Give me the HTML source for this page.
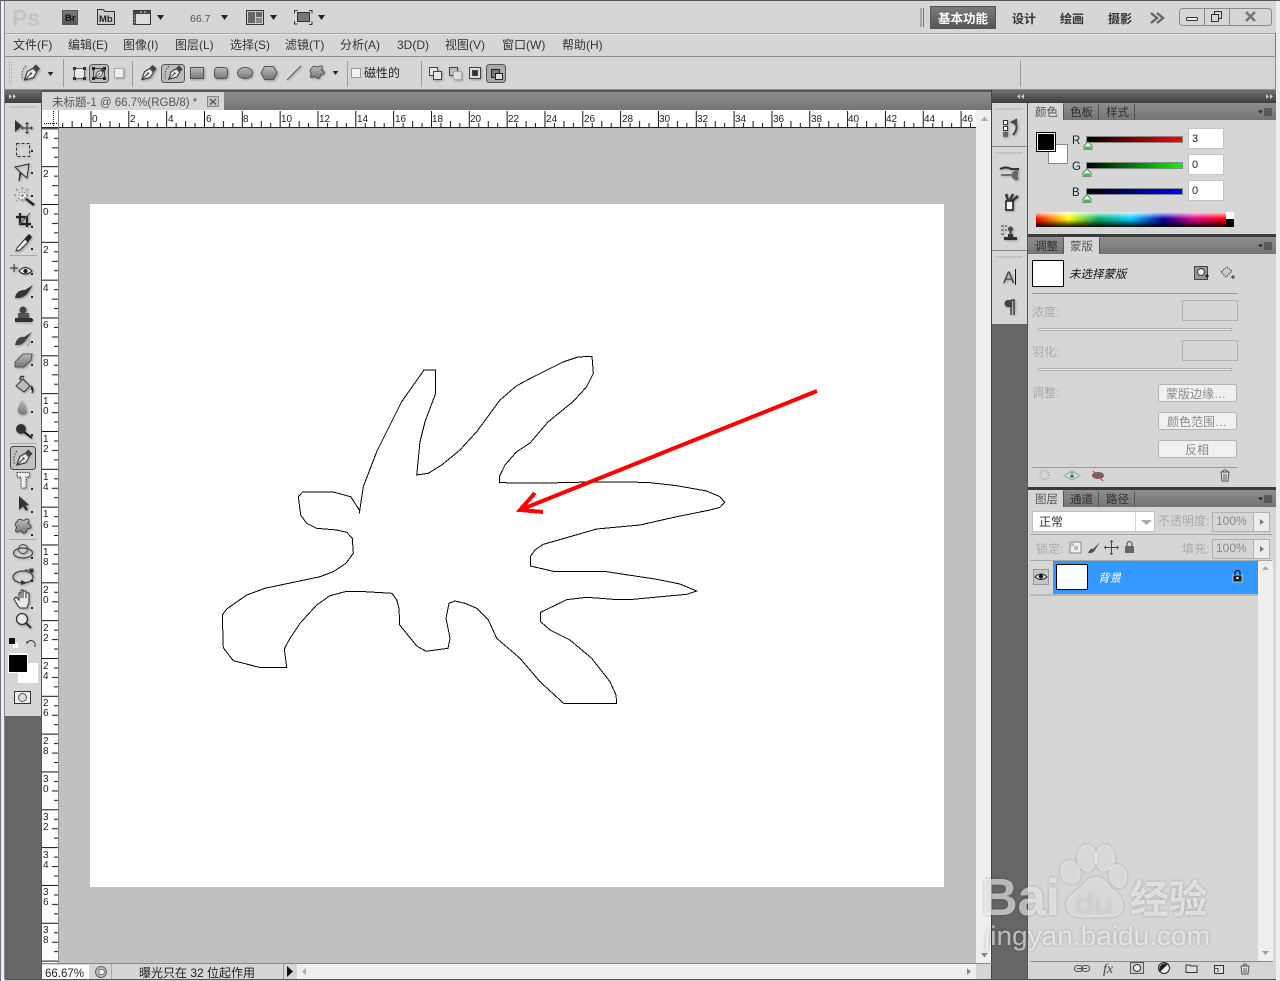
<!DOCTYPE html>
<html><head><meta charset="utf-8"><title>Photoshop</title>
<style>
html,body{margin:0;padding:0;background:#d6d6d6;width:1280px;height:981px;overflow:hidden}
svg{display:block}
text{font-family:"Liberation Sans","Noto Sans CJK SC",sans-serif;font-size:12px;fill:#2a2a2a}
.m{font-size:12px;fill:#333}
.r{font-size:10px;fill:#1a1a2a}
.tab{font-size:11.5px;fill:#2e2e2e}
.act{font-size:11.5px;fill:#555}
.dis{font-size:12px;fill:#a9a9a9;stroke:none}
.btn{font-size:12px;fill:#8a8a8a}
.pct{font-size:12px;fill:#888}
.sd{filter:drop-shadow(1px 1px 1px rgba(0,0,0,.28))}
</style></head><body>
<svg xmlns="http://www.w3.org/2000/svg" width="1280" height="981" viewBox="0 0 1280 981">
<defs>
<linearGradient id="hd" x1="0" y1="0" x2="0" y2="1"><stop offset="0" stop-color="#707070"/><stop offset="1" stop-color="#3c3c3c"/></linearGradient>
<linearGradient id="tb" x1="0" y1="0" x2="0" y2="1"><stop offset="0" stop-color="#8e8e8e"/><stop offset="1" stop-color="#747474"/></linearGradient>
<linearGradient id="sh" x1="0" y1="0" x2="0" y2="1"><stop offset="0" stop-color="#bbb"/><stop offset="1" stop-color="#777"/></linearGradient>
<linearGradient id="wk" x1="0" y1="0" x2="0" y2="1"><stop offset="0" stop-color="#7c7c7c"/><stop offset="1" stop-color="#555"/></linearGradient>
<linearGradient id="gr" x1="0" x2="1"><stop offset="0" stop-color="#000"/><stop offset="1" stop-color="#f00"/></linearGradient>
<linearGradient id="gg" x1="0" x2="1"><stop offset="0" stop-color="#000"/><stop offset="1" stop-color="#0f0"/></linearGradient>
<linearGradient id="gb" x1="0" x2="1"><stop offset="0" stop-color="#000"/><stop offset="1" stop-color="#00f"/></linearGradient>
<linearGradient id="spec" x1="0" x2="1">
<stop offset="0" stop-color="#f00"/><stop offset=".17" stop-color="#ff0"/><stop offset=".33" stop-color="#0a6"/><stop offset=".5" stop-color="#0cf"/><stop offset=".67" stop-color="#00a"/><stop offset=".83" stop-color="#d08"/><stop offset="1" stop-color="#f00"/></linearGradient>
<linearGradient id="specv" x1="0" y1="0" x2="0" y2="1"><stop offset="0" stop-color="#fff" stop-opacity=".85"/><stop offset=".45" stop-color="#fff" stop-opacity="0"/><stop offset=".5" stop-color="#000" stop-opacity="0"/><stop offset="1" stop-color="#000" stop-opacity=".95"/></linearGradient>
<pattern id="rt" x="90.5" y="111" width="37.83" height="16" patternUnits="userSpaceOnUse">
<rect x="0" y="0" width="1" height="16" fill="#111"/><rect x="9.5" y="12" width="1" height="4" fill="#111"/><rect x="19" y="10" width="1" height="6" fill="#111"/><rect x="28.4" y="12" width="1" height="4" fill="#111"/></pattern>
<pattern id="rl" x="42" y="204" width="16" height="37.83" patternUnits="userSpaceOnUse">
<rect x="0" y="0" width="16" height="1" fill="#111"/><rect x="12" y="9.5" width="4" height="1" fill="#111"/><rect x="10" y="19" width="6" height="1" fill="#111"/><rect x="12" y="28.4" width="4" height="1" fill="#111"/></pattern>
<symbol id="nib" viewBox="0 0 20 20"><path d="M2 18L5 9L11 5.5L15 9.5L11.5 15.5Z" fill="#e4e4e4" stroke="#3a3a3a" stroke-width="1.2"/><path d="M2.5 17.5L8.5 11.5" stroke="#3a3a3a" fill="none"/><circle cx="9" cy="11" r="1.1" fill="#3a3a3a"/><path d="M11 4.5L14 1.5L18.5 6L15.5 9Z" fill="#444"/></symbol>
<symbol id="star" viewBox="0 0 20 20"><path d="M5 3C8 1 9 5 12 3C15 1 18 3 15 7C19 8 20 12 16 12C13 12 15 17 11 17C8 17 9 13 6 15C3 17 1 15 3 12C4 10 1 9 2 7C3 5 4 5 5 3Z" fill="url(#sh)" stroke="#444"/></symbol>
<symbol id="menuic" viewBox="0 0 14 8"><path d="M0 2.5H5L2.5 5.5Z" fill="#222"/><path d="M6 1H14M6 3H14M6 5H14M6 7H14" stroke="#333"/></symbol>
<symbol id="tri" viewBox="0 0 7 5"><path d="M0 0H7L3.5 5Z" fill="#222"/></symbol>
<symbol id="sl" viewBox="0 0 10 9"><path d="M5 .8L9 5V8.3H1V5Z" fill="#fff" stroke="#3a8a4a"/><rect x="2" y="5.5" width="6" height="2.3" fill="#39b54a"/></symbol>
<symbol id="grip" viewBox="0 0 28 2"><path d="M0 1H28" stroke="#999" stroke-width="1.4" stroke-dasharray="1 1"/></symbol>
</defs>

<!-- window chrome -->
<rect width="1280" height="981" fill="#d6d6d6"/>
<rect width="1280" height="1" fill="#5a5560"/>
<rect x="0" y="0" width="1" height="981" fill="#6a7080"/>
<rect x="1" y="1" width="3" height="980" fill="#eceef0"/>
<rect x="1276" y="1" width="4" height="980" fill="#eceef0"/>
<rect x="4" y="1" width="1" height="978" fill="#888"/>
<rect x="1275" y="33" width="1" height="946" fill="#777"/>
<rect x="5" y="33" width="1270" height="1" fill="#a6a6a6"/>
<rect x="5" y="34" width="1270" height="1" fill="#e6e6e6"/>

<!-- app bar -->
<text x="12" y="26" style="font-size:23px;font-weight:bold;fill:#c4c4c4">Ps</text>
<rect x="62.500" y="10.500" width="15" height="14" fill="url(#wk)" stroke="#555"/><text x="65" y="21" style="font-size:9.5px;font-weight:bold;fill:#111">Br</text>
<path d="M97.5 13.5V9.5H103L105 11.5H114.5V24.5H97.5Z" fill="#ccc" stroke="#333"/><text x="99" y="22" style="font-size:9.5px;font-weight:bold;fill:#222">Mb</text>
<rect x="133.5" y="10.5" width="17" height="14" fill="#ddd" stroke="#333"/><path d="M133 11h18v3h-18zM133 11h3v14h-3z" fill="#444"/><path d="M134 16h1.3M134 19h1.3M134 22h1.3" stroke="#ddd"/><path d="M140 12h2M144 12h2" stroke="#ddd"/>
<use href="#tri" x="157" y="15" width="7" height="5"/>
<text x="190" y="22" style="font-size:10.5px;fill:#555">66.7</text>
<use href="#tri" x="221" y="15" width="7" height="5"/>
<rect x="246.5" y="10.5" width="17" height="14" fill="#ccc" stroke="#333"/><rect x="248" y="12" width="7" height="11" fill="#666"/><rect x="256" y="12" width="6" height="5" fill="#666"/><rect x="256" y="18" width="6" height="5" fill="#888"/>
<use href="#tri" x="270" y="15" width="7" height="5"/>
<path d="M294.5 13.5v-3h3M309 10.500h3v3M294.500 21v3h3M309 24.500h3v-3" stroke="#333" fill="none"/><rect x="297.500" y="12.500" width="12" height="9" fill="#777" stroke="#333"/>
<use href="#tri" x="318" y="15" width="7" height="5"/>
<path d="M921 8V27M923.500 8V27" stroke="#777"/>
<rect x="930.500" y="6.500" width="65" height="22" fill="url(#wk)" stroke="#555"/>
<text x="938" y="23" style="font-size:12.500px;font-weight:bold;fill:#fff">基本功能</text>
<text x="1012" y="23" style="font-size:12px;font-weight:bold;fill:#333">设计</text>
<text x="1060" y="23" style="font-size:12px;font-weight:bold;fill:#333">绘画</text>
<text x="1108" y="23" style="font-size:12px;font-weight:bold;fill:#333">摄影</text>
<path d="M1151 13L1157 18L1151 23M1157 13L1163 18L1157 23" stroke="#666" stroke-width="2.400" fill="none"/>
<rect x="1179.500" y="8.500" width="92" height="17" rx="3" fill="#d6d6d6" stroke="#8a8a8a"/>
<path d="M1204.500 8.500V25.500M1229.500 8.500V25.500" stroke="#8a8a8a"/>
<rect x="1186.500" y="17.500" width="11" height="3" rx="1" fill="#eee" stroke="#333"/>
<rect x="1211.500" y="14.500" width="7" height="7" fill="#d6d6d6" stroke="#333"/><path d="M1214.500 14.500v-3h7v7h-3" fill="none" stroke="#333"/>
<path d="M1246 12L1255 21M1255 12L1246 21" stroke="#777" stroke-width="2.600"/>

<!-- menu -->
<g class="menu">
<text class="m" x="13" y="49">文件(F)</text>
<text class="m" x="68" y="49">编辑(E)</text>
<text class="m" x="123" y="49">图像(I)</text>
<text class="m" x="175" y="49">图层(L)</text>
<text class="m" x="230" y="49">选择(S)</text>
<text class="m" x="285" y="49">滤镜(T)</text>
<text class="m" x="340" y="49">分析(A)</text>
<text class="m" x="397" y="49">3D(D)</text>
<text class="m" x="445" y="49">视图(V)</text>
<text class="m" x="502" y="49">窗口(W)</text>
<text class="m" x="562" y="49">帮助(H)</text>
</g>

<!-- options bar -->
<rect x="4.500" y="56.500" width="1271" height="33" fill="#d6d6d6" stroke="#8c8c8c"/>
<path d="M9.500 62V85M11.500 62V85" stroke="#aaa" stroke-dasharray="1 1"/>
<path d="M63.500 59V87M132.500 61V87M347.500 61V87M421.500 61V87M1020.500 60V87" stroke="#9c9c9c"/>
<g class="sd">
<use href="#nib" x="22" y="63" width="20" height="19"/><path d="M26 66Q20 72 23 80" stroke="#444" stroke-dasharray="1.500 1.500" fill="none"/>
<rect x="74.500" y="68.500" width="10" height="10" fill="#e8e8e8" stroke="#666"/><path d="M73 67h3v3h-3zM83 67h3v3h-3zM73 77h3v3h-3zM83 77h3v3h-3z" fill="#333"/>
<rect x="114.500" y="68.500" width="9" height="9" fill="#eee" stroke="#aaa"/>
<use href="#nib" x="140" y="63" width="18" height="19"/>
<rect x="190.500" y="67.500" width="13" height="11" fill="url(#sh)" stroke="#555"/>
<rect x="214.500" y="67.500" width="13" height="11" rx="3" fill="url(#sh)" stroke="#555"/>
<ellipse cx="245" cy="73" rx="7.500" ry="5.500" fill="url(#sh)" stroke="#555"/>
<path d="M264.500 66.500H273.500L277 73L273.500 79.500H264.500L261 73Z" fill="url(#sh)" stroke="#555"/>
<path d="M287 80L301 66" stroke="#555" stroke-width="1.100"/>
<use href="#star" x="308" y="64" width="18" height="17"/>
</g>
<use href="#tri" x="47" y="72" width="7" height="4"/>
<rect x="89.500" y="64.500" width="19" height="18" rx="3" fill="#bcbcbc" stroke="#555"/><rect x="93.500" y="68.500" width="11" height="10" fill="none" stroke="#444"/><path d="M92 67h3v3h-3zM103 67h3v3h-3zM92 77h3v3h-3zM103 77h3v3h-3z" fill="#222"/><use href="#nib" x="94" y="67" width="12" height="12"/>
<rect x="161.500" y="64.500" width="23" height="18" rx="3" fill="#bcbcbc" stroke="#555"/>
<use href="#nib" x="167" y="64" width="17" height="17"/><path d="M169 66Q163 72 166 80" stroke="#444" stroke-dasharray="1.500 1.500" fill="none"/>
<use href="#tri" x="332" y="71" width="7" height="4"/>
<rect x="351.500" y="68.500" width="9" height="9" fill="#f2f2f2" stroke="#999"/>
<text x="364" y="77" style="font-size:12px;fill:#222">磁性的</text>
<g fill="#e8e8e8" stroke="#444" class="sd">
<rect x="429.500" y="67.500" width="8" height="8"/><rect x="433.500" y="71.500" width="8" height="8"/>
<rect x="449.500" y="67.500" width="8" height="8" fill="#bbb"/><rect x="453.500" y="71.500" width="8" height="8" fill="#e0e0e0" stroke="#aaa"/>
<rect x="469.500" y="67.500" width="11" height="11" fill="#ddd"/><rect x="472.500" y="70.500" width="5" height="5" fill="#333"/>
</g>
<rect x="486.500" y="64.500" width="19" height="18" rx="3" fill="#aaa" stroke="#555"/><rect x="491.500" y="69.500" width="8" height="8" fill="#777" stroke="#222"/><rect x="495.500" y="73.500" width="7" height="6" fill="#ddd" stroke="#222"/>

<!-- dark side -->
<rect x="5" y="716" width="36" height="263" fill="#666"/>
<rect x="992" y="324" width="36" height="655" fill="#666"/>
<rect x="5" y="90" width="36" height="13" fill="url(#hd)"/>
<path d="M9 94L12 96.500L9 99ZM13 94L16 96.500L13 99Z" fill="#ccc"/>
<rect x="5" y="103" width="36" height="613" fill="#d6d6d6"/>
<rect x="41" y="90" width="1" height="889" fill="#555"/>

<!-- tab bar -->
<rect x="42" y="92" width="950" height="18" fill="url(#tb)"/>
<rect x="42" y="90" width="950" height="2" fill="#555"/>
<rect x="42" y="92" width="182" height="18" fill="#d6d6d6"/>
<text x="52" y="106" style="font-size:11.500px;fill:#555">未标题-1 @ 66.7%(RGB/8) *</text>
<rect x="207.500" y="96.500" width="11" height="10" fill="#c4c4c4" stroke="#888"/><path d="M210 99L216 104.500M216 99L210 104.500" stroke="#555" stroke-width="1.200"/>

<!-- canvas -->
<rect x="42" y="110" width="934" height="854" fill="#c0c0c0"/>
<rect x="42" y="110" width="935" height="17" fill="#fff"/>
<rect x="42" y="110" width="17" height="854" fill="#fff"/>
<rect x="59" y="111" width="917" height="16" fill="url(#rt)" shape-rendering="crispEdges"/>
<rect x="42" y="128" width="16" height="835" fill="url(#rl)" shape-rendering="crispEdges"/>
<rect x="42" y="127" width="934" height="1" fill="#222"/>
<rect x="58" y="110" width="1" height="854" fill="#888"/>
<path d="M44 123.500H58M53.500 111V127" stroke="#111" stroke-dasharray="1 1"/>
<g class="r-top">
<text class="r" x="92" y="122">0</text><text class="r" x="130" y="122">2</text><text class="r" x="168" y="122">4</text><text class="r" x="206" y="122">6</text><text class="r" x="243" y="122">8</text><text class="r" x="281" y="122">10</text><text class="r" x="319" y="122">12</text><text class="r" x="357" y="122">14</text><text class="r" x="395" y="122">16</text><text class="r" x="432" y="122">18</text><text class="r" x="470" y="122">20</text><text class="r" x="508" y="122">22</text><text class="r" x="546" y="122">24</text><text class="r" x="584" y="122">26</text><text class="r" x="622" y="122">28</text><text class="r" x="659" y="122">30</text><text class="r" x="697" y="122">32</text><text class="r" x="735" y="122">34</text><text class="r" x="773" y="122">36</text><text class="r" x="811" y="122">38</text><text class="r" x="848" y="122">40</text><text class="r" x="886" y="122">42</text><text class="r" x="924" y="122">44</text><text class="r" x="962" y="122">46</text>
</g>
<g class="r-left">
<text class="r" x="43" y="139">4</text><text class="r" x="43" y="177">2</text><text class="r" x="43" y="215">0</text><text class="r" x="43" y="253">2</text><text class="r" x="43" y="291">4</text><text class="r" x="43" y="328">6</text><text class="r" x="43" y="366">8</text>
<text class="r" x="43" y="404">1</text><text class="r" x="43" y="414">0</text>
<text class="r" x="43" y="442">1</text><text class="r" x="43" y="452">2</text>
<text class="r" x="43" y="480">1</text><text class="r" x="43" y="490">4</text>
<text class="r" x="43" y="517">1</text><text class="r" x="43" y="528">6</text>
<text class="r" x="43" y="555">1</text><text class="r" x="43" y="565">8</text>
<text class="r" x="43" y="593">2</text><text class="r" x="43" y="603">0</text>
<text class="r" x="43" y="631">2</text><text class="r" x="43" y="641">2</text>
<text class="r" x="43" y="669">2</text><text class="r" x="43" y="679">4</text>
<text class="r" x="43" y="706">2</text><text class="r" x="43" y="716">6</text>
<text class="r" x="43" y="744">2</text><text class="r" x="43" y="754">8</text>
<text class="r" x="43" y="782">3</text><text class="r" x="43" y="792">0</text>
<text class="r" x="43" y="820">3</text><text class="r" x="43" y="830">2</text>
<text class="r" x="43" y="858">3</text><text class="r" x="43" y="868">4</text>
<text class="r" x="43" y="895">3</text><text class="r" x="43" y="905">6</text>
<text class="r" x="43" y="933">3</text><text class="r" x="43" y="943">8</text>
</g>
<rect x="90" y="204" width="854" height="683" fill="#fff"/>
<path d="M424 370L435.700 370L435.700 393.300L425 421.700L420 441.700L416.700 475L428.300 473.300L441.700 465L460 450L476.700 431.700L500 400L516.700 385.700L533 377L563 362L578 357L592 356.300L593.300 373.300L586.700 386.700L573 401.700L548 422L530 443L516.700 451.700L505 465L499.300 476.700L499.300 482.300L510 483L546.700 483L590 482L646.700 482.300L676.700 485.700L706.700 491L720 496.700L724.700 502.300L720 507.300L710 510L676.700 516.700L640 525L596.700 529L570 536.700L543.300 544.300L535 550L530.300 556.700L530.300 566L555 571.700L606.700 571.700L656.700 579.300L680 584L696.700 591L686.700 594.300L633.300 599.300L613.300 599.300L586.700 597.300L566.700 599.700L540.700 612.300L540.700 621.700L550 630L570 640L591.700 658.300L610 681.700L616 695L616.700 703.700L564 703.700L540 681.700L520 658.300L496.700 638.300L491 625.700L488.300 620L476.700 608.300L465 603.300L455 601L449 603.300L446 618.300L450 638.300L448 648.300L426 651.300L416.700 646L399.700 625L399 608.300L396.700 600L392 593.300L365 591.700L346.700 591.300L330 595.700L316.700 605L300 623.300L290 638.300L284.300 649L286.700 667.300L259.300 667.300L233.300 660.700L223.300 647.700L222.300 615L226.700 609L246.700 595L265 588.300L320 576.700L333.300 571.700L346 563.300L353.300 553.300L352.300 538.300L346.700 532.300L336.700 530L316.700 528.300L306.700 523.300L300.700 515L298.300 496.700L302.700 492L333.300 492L350.700 496.700L359.300 510L359.300 513.300L363.300 486.700L376.700 451.700L401.700 401.700Z" fill="none" stroke="#000" stroke-width="1" shape-rendering="crispEdges"/>
<path d="M817 391L520 510M535 493L520 510L543 512" fill="none" stroke="#f00" stroke-width="4" shape-rendering="crispEdges"/>

<!-- doc scrollbars -->
<rect x="976" y="110" width="16" height="854" fill="#efefef"/>
<rect x="991" y="90" width="1" height="889" fill="#444"/>
<path d="M981 121H988L984.500 116.500Z" fill="#aaa"/>
<path d="M981 953H988L984.500 957.500Z" fill="#888"/>
<rect x="42" y="963" width="950" height="1" fill="#888"/>
<rect x="42" y="964" width="949" height="15" fill="#d6d6d6"/>
<rect x="42" y="965" width="47" height="14" fill="#fff"/>
<text x="45" y="977" style="font-size:11.500px;fill:#223">66.67%</text>
<circle cx="101" cy="972" r="5.500" fill="#bbb" stroke="#666"/><path d="M99 969.500h3a2.500 2.500 0 0 1 0 5h-3z" fill="#eee" stroke="#666" stroke-width=".8"/>
<rect x="111" y="964" width="1" height="15" fill="#aaa"/>
<text x="139" y="977" style="font-size:12px;fill:#222">曝光只在 32 位起作用</text>
<rect x="283" y="964" width="1" height="15" fill="#999"/>
<path d="M287 966V977L293 971.500Z" fill="#111"/>
<rect x="297" y="964" width="679" height="15" fill="#efefef"/>
<path d="M306 968V975L302 971.500Z" fill="#aaa"/>
<path d="M967 968V975L971 971.500Z" fill="#888"/>
<rect x="5" y="979" width="1271" height="1" fill="#555"/>

<!-- left tools -->
<use href="#grip" x="10" y="106" width="27" height="2"/>
<g class="sd">
<path d="M15 120V132L22 126Z" fill="#333"/><path d="M27 124V132M23 128H31" stroke="#333"/><path d="M27 122l-2 2h4zM27 134l-2-2h4zM21 128l2-2v4zM33 128l-2-2v4z" fill="#333"/>
<rect x="16.500" y="143.500" width="13" height="13" fill="none" stroke="#333" stroke-dasharray="3 2"/>
<path d="M15 167L29 164L27 178L21 173L19 181L20 172Z" fill="none" stroke="#333" stroke-width="1.100"/>
<path d="M26 199L34 205" stroke="#222" stroke-width="2.500"/><circle cx="22" cy="195" r="4.500" fill="#eee"/><path d="M22 187v16M14 195h16M16 189l12 12M28 189l-12 12" stroke="#777" stroke-dasharray="2 2"/>
<path d="M20 213V224H31M16 217H27V227" fill="none" stroke="#222" stroke-width="2.200"/><path d="M19 225L30 213" stroke="#555"/>
<path d="M17 248L25 239L28 242L20 250L16 251Z" fill="#eee" stroke="#333"/><path d="M25 238L29 234L32 237L28 242Z" fill="#222"/>
<path d="M14 264V272M10 268H18" stroke="#333"/><path d="M19 271Q25 264 32 271Q25 277 19 271Z" fill="#eee" stroke="#222"/><circle cx="25.500" cy="271" r="2.200" fill="#222"/>
<path d="M15 298Q16 290 25 290L33 285L27 294Q22 299 15 298Z" fill="#333"/>
<path d="M15 318h17v4H15z" fill="#333"/><path d="M18 313h11v5H18z" fill="#555"/><circle cx="23" cy="310" r="3.500" fill="#444"/>
<path d="M15 345Q17 336 24 337L32 332L26 340Q22 346 15 345Z" fill="#444"/><path d="M29 340q1 3-2 6" stroke="#666" fill="none" stroke-dasharray="1 1"/>
<path d="M15 362L23 354H32L31 360L24 367H15Z" fill="url(#sh)" stroke="#555"/>
<path d="M16 386L23 379L30 386L24 392Z" fill="#bbb" stroke="#333"/><path d="M20 380Q20 375 24 377M31 386Q34 389 32 393" stroke="#333" fill="none" stroke-width="1.500"/>
<path d="M22 400Q16 409 18 412A5 5 0 0 0 27 412Q27 408 22 400Z" fill="url(#sh)"/>
<circle cx="21" cy="429" r="5" fill="#333"/><path d="M24 432L32 438" stroke="#222" stroke-width="2.200"/>
</g>
<path d="M9.500 255.500H37M9.500 443.500H37M9.500 539.500H37" stroke="#aaa"/>
<rect x="10.500" y="446.500" width="25" height="23" rx="3" fill="#c2c2c2" stroke="#444"/>
<use href="#nib" x="15" y="448" width="19" height="19"/><path d="M17 451Q12 457 15 465" stroke="#333" stroke-dasharray="1.500 1.500" fill="none"/>
<g class="sd">
<path d="M17 472.500H29.500V477H26V488H21V477H17Z" fill="#eee" stroke="#444" stroke-dasharray="1.500 1"/>
<path d="M19 496V510L23 506.500L26 511L28 509.500L25.500 505.500L29 505Z" fill="#333"/>
<use href="#star" x="13" y="517" width="20" height="19"/>
<circle cx="23" cy="549" r="4.500" fill="#ccc" stroke="#444"/><ellipse cx="23" cy="553" rx="9.500" ry="5" fill="none" stroke="#444" stroke-width="1.200"/>
<ellipse cx="23" cy="577" rx="10" ry="6" fill="none" stroke="#444" stroke-width="1.300"/><path d="M21 580l6 3-6 2z" fill="#333"/><path d="M25 570H33M30 569h3v3h-3z" stroke="#444"/>
<path d="M18 606L14 599L16 597L19 600V593L21 592V598V590L23 590V598V591L26 591V598V593L29 593V602L27 608H20Z" fill="#e8e8e8" stroke="#333"/>
<circle cx="22" cy="619" r="5.500" fill="#e8e8e8" stroke="#333" stroke-width="1.300"/><path d="M26 623L31 628" stroke="#333" stroke-width="2"/>
</g>
<rect x="13" y="643" width="5" height="5" fill="#fff"/><rect x="9" y="638" width="6" height="6" fill="#111"/>
<path d="M27 643Q31 638 35 643M35 643V647M27 641V644" stroke="#333" fill="none"/>
<rect x="18" y="663" width="20" height="20" fill="#fff"/>
<rect x="8" y="653" width="20" height="20" fill="#fff"/><rect x="9" y="655" width="18" height="17" fill="#000"/>
<rect x="14.500" y="691.500" width="16" height="12" fill="#eee" stroke="#333"/><circle cx="22.500" cy="697.500" r="4" fill="#ddd" stroke="#555"/>
<g fill="#222"><path d="M33 150h-2v2h2zM33 172h-2v2h2zM33 195h-2v2h2zM33 226h-2v2h2zM33 248h-2v2h2zM33 273h-2v2h2zM33 296h-2v2h2zM33 319h-2v2h2zM33 341h-2v2h2zM33 364h-2v2h2zM33 388h-2v2h2zM33 411h-2v2h2zM33 434h-2v2h2zM33 488h-2v2h2zM33 511h-2v2h2zM33 534h-2v2h2zM33 557h-2v2h2zM33 580h-2v2h2zM33 607h-2v2h2z"/></g>

<!-- right header -->
<rect x="992" y="90" width="284" height="13" fill="url(#hd)"/>
<path d="M1020 94L1017 96.500L1020 99ZM1024 94L1021 96.500L1024 99Z" fill="#ccc"/>
<path d="M1266 94L1269 96.500L1266 99ZM1270 94L1273 96.500L1270 99Z" fill="#ccc"/>

<!-- dock -->
<rect x="992" y="103" width="36" height="221" fill="#d6d6d6"/>
<path d="M992 146.500H1027M992 250.500H1027" stroke="#8a8a8a"/>
<rect x="1027" y="103" width="1" height="876" fill="#555"/>
<use href="#grip" x="996" y="108" width="27" height="2"/>
<use href="#grip" x="996" y="152" width="27" height="2"/>
<use href="#grip" x="996" y="256" width="27" height="2"/>
<g class="sd">
<rect x="1003.500" y="120.500" width="4" height="4" fill="#fff" stroke="#333"/><rect x="1003.500" y="126.500" width="4" height="4" fill="#fff" stroke="#333"/><rect x="1003" y="132" width="5" height="5" fill="#666"/>
<path d="M1012 122L1016 120V124ZM1015 122Q1019 128 1013 135" fill="none" stroke="#444" stroke-width="2"/>
<path d="M1000 169Q1006 166 1011 169H1019" stroke="#333" stroke-width="2" fill="none"/><path d="M1001 175H1011" stroke="#444" stroke-width="1.300"/><path d="M1011 175Q1013 170 1018 170V180Q1013 181 1011 175Z" fill="#666"/>
<path d="M1006 194L1008 200M1013 194L1010 200M1018 196L1012 201" stroke="#333" stroke-width="2.500"/><rect x="1006" y="201" width="7" height="9" fill="#fff" stroke="#222" stroke-width="1.600"/>
<path d="M1001 226h3M1001 230h3M1001 234h3M1005 226h2M1005 230h2" stroke="#444"/><path d="M1004 237H1017V240H1004ZM1008 234H1013V237H1008Z" fill="#333"/><circle cx="1010.500" cy="229" r="2.500" fill="#444"/><path d="M1010.500 230V235" stroke="#444" stroke-width="2"/>
<text x="1003" y="283" style="font-size:17px;fill:#444">A</text>
<path d="M1011 300H1015M1011 300V315M1014 300V315" stroke="#444" stroke-width="1.500"/><path d="M1012 300H1008A3.500 3.500 0 0 0 1008 307H1012Z" fill="#444"/>
</g>
<path d="M1015.500 269V285" stroke="#111"/>

<!-- color panel -->
<rect x="1028" y="103" width="248" height="17" fill="url(#tb)"/>
<rect x="1028" y="103" width="35" height="18" fill="#d6d6d6"/>
<path d="M1063.500 104V120M1098.500 104V120M1134.500 104V120" stroke="#555"/>
<text class="act" x="1035" y="116" style="fill:#555">颜色</text>
<text class="tab" x="1070" y="116">色板</text>
<text class="tab" x="1106" y="116">样式</text>
<use href="#menuic" x="1258" y="108" width="14" height="8"/>
<rect x="1028" y="120" width="248" height="114" fill="#d6d6d6"/>
<rect x="1048.500" y="144.500" width="19" height="19" fill="#fff" stroke="#888"/>
<rect x="1036.500" y="132.500" width="19" height="19" fill="#000" stroke="#000"/><rect x="1037.500" y="133.500" width="17" height="17" fill="none" stroke="#fff"/>
<text x="1072" y="144" style="font-size:11.500px;fill:#123">R</text>
<text x="1072" y="170" style="font-size:11.500px;fill:#123">G</text>
<text x="1072" y="196" style="font-size:11.500px;fill:#123">B</text>
<rect x="1086.500" y="136.500" width="96" height="6" fill="url(#gr)" stroke="#888"/>
<rect x="1086.500" y="162.500" width="96" height="6" fill="url(#gg)" stroke="#888"/>
<rect x="1086.500" y="188.500" width="96" height="6" fill="url(#gb)" stroke="#888"/>
<use href="#sl" x="1083" y="141" width="10" height="9"/>
<use href="#sl" x="1082" y="168" width="10" height="9"/>
<use href="#sl" x="1082" y="194" width="10" height="9"/>
<g fill="#fff" stroke="#c4c4c4"><rect x="1188.500" y="128.500" width="35" height="20"/><rect x="1188.500" y="154.500" width="35" height="20"/><rect x="1188.500" y="180.500" width="35" height="20"/></g>
<text x="1192" y="142" style="font-size:11px;fill:#223">3</text><text x="1192" y="168" style="font-size:11px;fill:#223">0</text><text x="1192" y="194" style="font-size:11px;fill:#223">0</text>
<rect x="1036" y="212" width="190" height="15" fill="url(#spec)"/><rect x="1036" y="212" width="190" height="15" fill="url(#specv)"/>
<rect x="1226" y="212" width="8" height="7" fill="#fff"/><rect x="1226" y="219" width="8" height="8" fill="#000"/>

<!-- mask panel -->
<rect x="1028" y="234" width="248" height="3" fill="#3a3a3a"/>
<rect x="1028" y="237" width="248" height="17" fill="url(#tb)"/>
<rect x="1064" y="237" width="35" height="18" fill="#d6d6d6"/>
<path d="M1063.500 238V254M1099.500 238V254" stroke="#555"/>
<text class="tab" x="1035" y="250">调整</text>
<text class="act" x="1070" y="250">蒙版</text>
<use href="#menuic" x="1258" y="242" width="14" height="8"/>
<rect x="1028" y="254" width="248" height="233" fill="#d6d6d6"/>
<rect x="1032.500" y="260.500" width="31" height="26" fill="#fff" stroke="#000"/>
<text x="1069" y="278" style="font-size:11.500px;font-style:italic;fill:#111">未选择蒙版</text>
<rect x="1194.500" y="266.500" width="13" height="13" fill="#999" stroke="#444"/><circle cx="1201" cy="272" r="3.500" fill="#eee" stroke="#333"/><path d="M1205 276h4M1207 274v4" stroke="#111"/>
<path d="M1221 272L1227 267L1232 271L1226 277Z" fill="#ccc" stroke="#444" stroke-dasharray="1.500 1"/><path d="M1231 277h4M1233 275v4" stroke="#333"/>
<path d="M1032 293.500H1238M1032 467.500H1238" stroke="#999"/>
<text class="dis" x="1032" y="316">浓度:</text>
<text class="dis" x="1032" y="356">羽化:</text>
<text class="dis" x="1032" y="397">调整:</text>
<g fill="#d6d6d6" stroke="#b0b0b0"><rect x="1182.500" y="300.500" width="55" height="20"/><rect x="1182.500" y="340.500" width="55" height="20"/></g>
<g fill="#efefef" stroke="#b0b0b0"><rect x="1038.500" y="328.500" width="193" height="2"/><rect x="1038.500" y="368.500" width="193" height="2"/></g>
<g fill="#f0f0f0" stroke="#b4b4b4"><rect x="1158.500" y="384.500" width="78" height="17" rx="2"/><rect x="1158.500" y="412.500" width="78" height="17" rx="2"/><rect x="1158.500" y="440.500" width="78" height="17" rx="2"/></g>
<text class="btn" x="1166" y="398">蒙版边缘…</text>
<text class="btn" x="1167" y="426">颜色范围…</text>
<text class="btn" x="1185" y="454">反相</text>
<circle cx="1044.500" cy="475" r="4.500" fill="none" stroke="#888" stroke-dasharray="1 1.500"/>
<path d="M1064 475.500L1072 471L1080 475.500L1072 480Z" fill="#cfe4dc" stroke="#7fa99a"/><path d="M1072 472V477M1070 475.500l2 2 2-2" stroke="#256" fill="none"/>
<ellipse cx="1098" cy="475.500" rx="6" ry="3.500" fill="#666"/><path d="M1093 471L1103 481" stroke="#e33" stroke-width="1.200"/>
<path d="M1221 472H1229L1228 481H1222ZM1222 472l2-2h2l2 2" fill="#ddd" stroke="#555"/><path d="M1224 474V480M1226 474V480" stroke="#666"/>

<!-- layers -->
<rect x="1028" y="487" width="248" height="3" fill="#3a3a3a"/>
<rect x="1028" y="490" width="248" height="17" fill="url(#tb)"/>
<rect x="1028" y="490" width="35" height="18" fill="#d6d6d6"/>
<path d="M1063.500 491V507M1098.500 491V507M1134.500 491V507" stroke="#555"/>
<text class="act" x="1035" y="503">图层</text>
<text class="tab" x="1070" y="503">通道</text>
<text class="tab" x="1106" y="503">路径</text>
<use href="#menuic" x="1258" y="495" width="14" height="8"/>
<rect x="1028" y="507" width="248" height="472" fill="#d6d6d6"/>
<rect x="1032.500" y="511.500" width="122" height="20" fill="#fff" stroke="#c0c0c0"/>
<path d="M1135.500 512V531" stroke="#d0d0d0"/>
<path d="M1141 520H1152L1146.500 525Z" fill="#aaa"/>
<text x="1039" y="526" style="font-size:12px;fill:#333">正常</text>
<text class="dis" x="1158" y="525">不透明度:</text>
<rect x="1212.500" y="512.500" width="41" height="19" fill="#d6d6d6" stroke="#b0b0b0"/><rect x="1253.500" y="512.500" width="16" height="19" fill="#ececec" stroke="#b0b0b0"/><path d="M1260 519V525L1264 522Z" fill="#777"/>
<text class="pct" x="1216" y="525">100%</text>
<path d="M1030 534.500H1272M1030 560.500H1272" stroke="#a8a8a8"/>
<text class="dis" x="1036" y="553">锁定:</text>
<rect x="1070" y="542" width="11" height="11" fill="#eee" stroke="#888"/><path d="M1070 542h4v4h-4zM1074 546h4v4h-4z" fill="#bbb"/>
<path d="M1088 553Q1091 547 1093 549L1100 542L1095 550Q1093 554 1088 553Z" fill="#555"/>
<path d="M1111.500 541V554M1105 547.500H1118" stroke="#444"/><path d="M1111.500 540l-2 2h4zM1111.500 555l-2-2h4zM1104 547.500l2-2v4zM1119 547.500l-2-2v4z" fill="#444"/>
<rect x="1125" y="546" width="9" height="7" fill="#666"/><path d="M1127 546V544A2.500 2.500 0 0 1 1132 544V546" fill="none" stroke="#666" stroke-width="1.300"/>
<text class="dis" x="1182" y="553">填充:</text>
<rect x="1212.500" y="539.500" width="41" height="19" fill="#d6d6d6" stroke="#b0b0b0"/><rect x="1253.500" y="539.500" width="16" height="19" fill="#ececec" stroke="#b0b0b0"/><path d="M1260 546V552L1264 549Z" fill="#777"/>
<text class="pct" x="1216" y="552">100%</text>
<rect x="1030" y="561" width="23" height="34" fill="#d6d6d6"/>
<rect x="1033.500" y="569.500" width="15" height="15" fill="#c6c6c6" stroke="#999"/>
<path d="M1035 577Q1041 571 1047 577Q1041 582 1035 577Z" fill="#eee" stroke="#222"/><circle cx="1041" cy="576.500" r="2.200" fill="#111"/>
<rect x="1053" y="561" width="205" height="33" fill="#3399ff"/>
<rect x="1056.500" y="564.500" width="31" height="25" fill="#fff" stroke="#000"/>
<text x="1098" y="582" style="font-size:11.500px;font-style:italic;fill:#fff">背景</text>
<rect x="1233" y="575" width="9" height="7" fill="#222" stroke="#fff" stroke-width=".6"/><path d="M1235 575V573A2.500 2.500 0 0 1 1240 573V575" fill="none" stroke="#111" stroke-width="1.200"/><rect x="1236.500" y="577" width="2" height="2" fill="#fff"/>
<rect x="1030" y="594.500" width="228" height="1" fill="#999"/>
<rect x="1258" y="561" width="15" height="401" fill="#efefef"/>
<path d="M1262 570H1269L1265.500 566Z" fill="#aaa"/>
<path d="M1262 951H1269L1265.500 955Z" fill="#999"/>
<rect x="1030" y="961" width="243" height="1" fill="#8a8a8a"/>
<rect x="1074.500" y="965.500" width="8" height="6" rx="3" fill="none" stroke="#555"/><rect x="1081.500" y="965.500" width="8" height="6" rx="3" fill="none" stroke="#555"/><path d="M1077 968.500h10" stroke="#555"/>
<text x="1103" y="973" style="font-family:'Liberation Serif',serif;font-size:14px;font-style:italic;fill:#444">fx</text>
<rect x="1130.500" y="962.500" width="13" height="11" fill="#ccc" stroke="#555"/><circle cx="1137" cy="968" r="3.500" fill="#eee" stroke="#333"/>
<circle cx="1164" cy="968" r="5.500" fill="#eee" stroke="#222"/><path d="M1167.800 964.200A5.500 5.500 0 0 1 1160.200 971.800Z" fill="#222" transform="rotate(180 1164 968)"/>
<path d="M1186 972.500V965H1190L1191 966H1197V972.500Z" fill="#ddd" stroke="#333"/>
<path d="M1214.500 965.500H1223.500V973.500H1214.500Z" fill="#ddd" stroke="#333"/><path d="M1214 968.500H1218V972" fill="#eee" stroke="#444"/>
<path d="M1241 966H1249L1248 974H1242ZM1243 966l1-2h2l1 2" fill="#ddd" stroke="#555"/><path d="M1244 968V973M1246 968V973" stroke="#666"/>

<!-- watermark -->
<g style="filter:drop-shadow(0 0 1.500px rgba(0,0,0,.4))">
<g fill="#fff" fill-opacity=".55">
<ellipse cx="1087" cy="858" rx="10" ry="13.500"/><ellipse cx="1105" cy="858" rx="10" ry="13.500"/>
<ellipse cx="1070.500" cy="872" rx="10" ry="12" transform="rotate(-20 1070.500 872)"/><ellipse cx="1118" cy="876" rx="9" ry="12" transform="rotate(-15 1118 876)"/>
<path d="M1096 877C1105 877 1108 886 1114 890C1122 896 1125 903 1122 911C1119 917 1110 918 1096 917C1080 918 1070 918 1067 909C1064 901 1070 896 1077 890C1084 885 1087 877 1096 877Z"/>
</g>
<text x="1075" y="913" style="font-size:28px;font-weight:normal;fill:#cfcfcf" textLength="38" lengthAdjust="spacingAndGlyphs">du</text>
<text x="981" y="915" style="font-size:52px;font-weight:bold;fill:#fff;fill-opacity:.6" textLength="79" lengthAdjust="spacingAndGlyphs">Bai</text>
<text x="1130" y="913" style="font-size:38.500px;fill:#fff;fill-opacity:.6;font-weight:bold">经验</text>
<text x="984" y="945" style="font-size:27px;fill:#fff;fill-opacity:.6" textLength="226" lengthAdjust="spacingAndGlyphs">jingyan.baidu.com</text>
</g>
</svg>
</body></html>
